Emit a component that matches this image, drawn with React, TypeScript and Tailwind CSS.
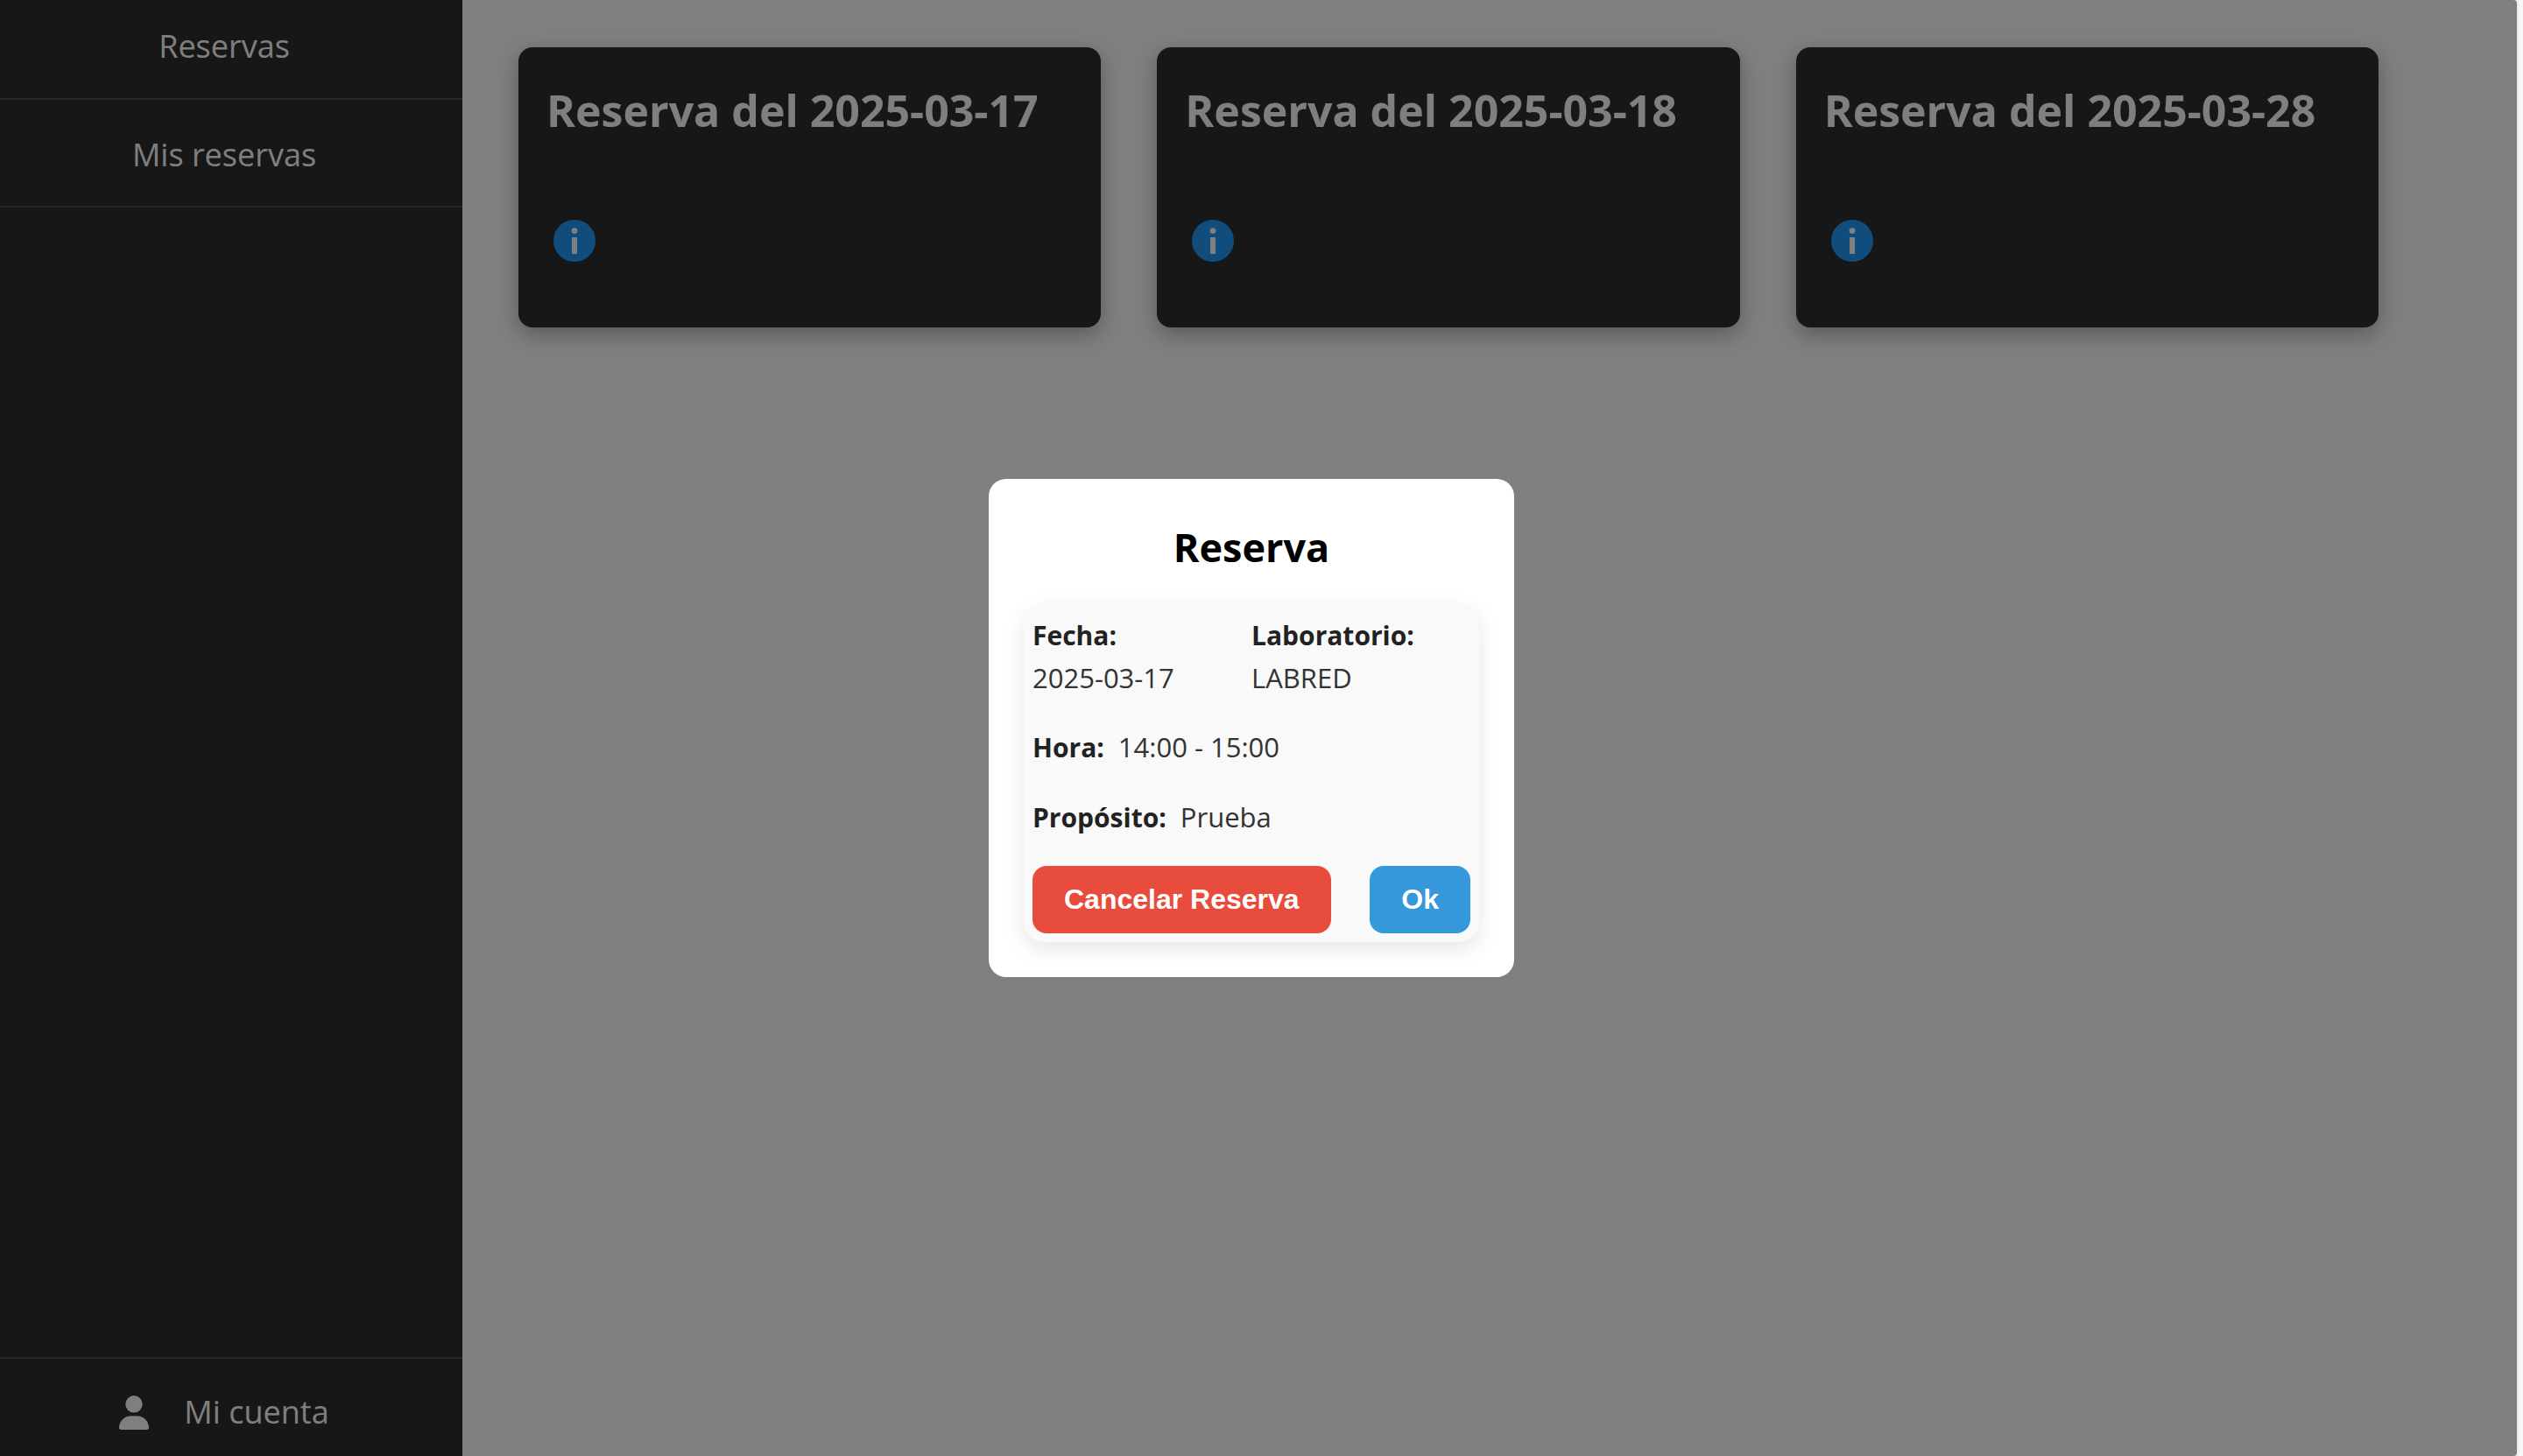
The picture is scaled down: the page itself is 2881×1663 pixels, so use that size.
import { FaUser } from 'react-icons/fa6';

const reservations = ['2025-03-17', '2025-03-18', '2025-03-28'];

function InfoIcon() {
  return (
    <svg viewBox="0 0 48 48" className="size-12" aria-hidden="true">
      <circle cx="24" cy="24" r="24" fill="#229af8" />
      <circle cx="24" cy="12.6" r="3.4" fill="#fff" />
      <rect x="21" y="20" width="6" height="19" fill="#fff" />
    </svg>
  );
}

function Sidebar() {
  return (
    <nav className="flex w-[528px] shrink-0 flex-col bg-[#2e2e2e] text-[36px] leading-[54px] text-white">
      <a href="#reservas" className="border-b-2 border-[#4d4d4d] pt-[26px] pr-4 pb-8 text-center">
        Reservas
      </a>
      <a href="#mis-reservas" className="border-b-2 border-[#4d4d4d] pt-9 pr-4 pb-[31px] text-center">
        Mis reservas
      </a>
      <a
        href="#mi-cuenta"
        className="mt-auto flex items-center justify-center gap-10 border-t-2 border-[#4d4d4d] pt-[34px] pr-4 pb-[23px]"
      >
        <FaUser className="h-[39px] w-[34px]" />
        <span>Mi cuenta</span>
      </a>
    </nav>
  );
}

function ReservationCard({ date }: { date: string }) {
  return (
    <article className="rounded-2xl bg-[#2e2e2e] px-8 pt-[38px] pb-[67px] text-white shadow-[0_8px_24px_rgba(0,0,0,0.3)]">
      <h2 className="mb-[83px] text-[50px] leading-[68px] font-bold whitespace-nowrap">Reserva del {date}</h2>
      <button type="button" aria-label={`Detalles de la reserva del ${date}`} className="block p-2">
        <InfoIcon />
      </button>
    </article>
  );
}

function ReservationDialog() {
  return (
    <div
      role="dialog"
      aria-modal="true"
      aria-labelledby="dialog-title"
      className="w-[600px] rounded-[20px] bg-white px-10 pt-[46px] pb-10"
    >
      <h2 id="dialog-title" className="mb-[33px] text-center text-[45px] leading-[64px] font-bold text-black">
        Reserva
      </h2>
      <div className="flex flex-col gap-[31px] rounded-3xl bg-[#f9f9f9] px-[10px] pt-3 pb-[10px] text-[31px] leading-[48px] text-[#333] shadow-[0_8px_24px_rgba(0,0,0,0.1)]">
        <div className="grid grid-cols-2">
          <div className="flex flex-col">
            <strong className="text-[30px] text-[#222]">Fecha:</strong>
            <span>2025-03-17</span>
          </div>
          <div className="flex flex-col">
            <strong className="text-[30px] text-[#222]">Laboratorio:</strong>
            <span>LABRED</span>
          </div>
        </div>
        <div className="flex items-baseline gap-4">
          <strong className="text-[30px] text-[#222]">Hora:</strong>
          <span>14:00 - 15:00</span>
        </div>
        <div className="flex items-baseline gap-4">
          <strong className="text-[30px] text-[#222]">Propósito:</strong>
          <span>Prueba</span>
        </div>
        <div className="flex justify-between font-['Liberation_Sans',Arial,sans-serif] text-[32px] leading-[37px] font-bold text-white">
          <button type="button" className="rounded-2xl bg-[#e74c3c] px-9 py-5">
            Cancelar Reserva
          </button>
          <button type="button" className="rounded-2xl bg-[#3498db] px-9 py-5">
            Ok
          </button>
        </div>
      </div>
    </div>
  );
}

export default function App() {
  return (
    <div className="flex min-h-screen bg-[#f7f7f7] font-['Open_Sans','Noto_Sans',sans-serif]">
      <div className="relative flex flex-1 overflow-hidden rounded-r-[4px] bg-white shadow-[0_0_4px_rgba(0,0,0,0.15)]">
        <Sidebar />
        <main className="grid flex-1 grid-cols-3 items-start gap-16 pt-[54px] pr-[158px] pl-16">
          {reservations.map((date) => (
            <ReservationCard key={date} date={date} />
          ))}
        </main>
        <div className="absolute inset-0 flex items-center justify-center bg-black/50 pr-4">
          <ReservationDialog />
        </div>
      </div>
      <div className="w-[7px] shrink-0" />
    </div>
  );
}
